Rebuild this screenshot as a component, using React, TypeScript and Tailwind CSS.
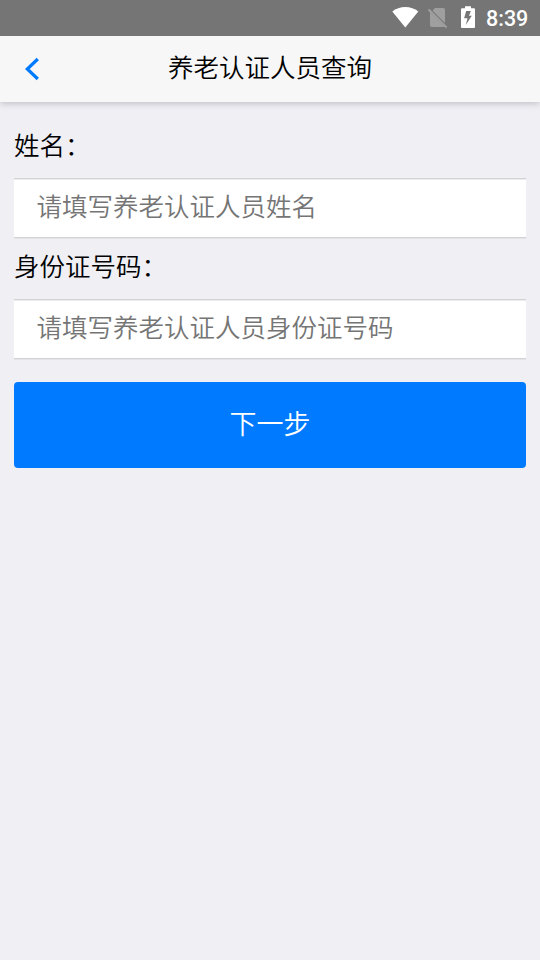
import { useState } from "react";

interface FieldProps {
  label: string;
  placeholder: string;
  value: string;
  onChange: (value: string) => void;
}

function StatusBar() {
  return (
    <div className="relative z-10 flex h-9 shrink-0 items-center bg-[#757575] pl-[392px] text-white">
      <svg className="h-9 w-[88px] shrink-0" viewBox="392 0 88 36" fill="currentColor">
        {/* wifi */}
        <path d="M392.3 11.6C395.8 8.6 400.5 7 405.3 7s9.5 1.6 13 4.6L405.3 27.6z" />
        {/* no sim */}
        <g opacity="0.3">
          <path d="M435 8H443.2a1.8 1.8 0 0 1 1.8 1.8V23L433.4 11.4 432.6 10.6z" />
          <path d="M430 12.2 444.4 26.6Q444 27 443.2 27H431.8a1.8 1.8 0 0 1-1.8-1.8z" />
          <path d="m427.8 10.2 1.5-1.5L447.3 26.700l-1.500 1.500z" />
        </g>
        {/* battery, charging */}
        <path
          fillRule="evenodd"
          d="M465 6.3h6v2h3a1 1 0 0 1 1 1V27a1 1 0 0 1-1 1h-12a1 1 0 0 1-1-1V9.3a1 1 0 0 1 1-1h3zM466.2 11h4.600l-1.800 4.700h2.800L465.800 25l1.700-6.700h-3.400z"
        />
      </svg>
      <span className="ml-[6px] pt-[2px] font-[Roboto] text-[21.5px] leading-none font-medium">8:39</span>
    </div>
  );
}

function Header({ title }: { title: string }) {
  return (
    <header className="relative flex h-[66px] shrink-0 items-center justify-center bg-[#f7f7f7] shadow-[0_1px_7px_#b8b8bc]">
      <button className="absolute left-6 top-[20px]" aria-label="返回">
        <svg className="h-[26px] w-4" viewBox="0 0 16 26" fill="none" stroke="#007aff" strokeWidth="3.2">
          <path d="M13.8 3 3.300 13 13.8 23" />
        </svg>
      </button>
      <h1 className="pb-[7px] text-[25.5px] leading-none font-[350]">{title}</h1>
    </header>
  );
}

function Field({ label, placeholder, value, onChange }: FieldProps) {
  return (
    <label className="block">
      <span className="flex h-[61px] items-center pb-[7px] text-[25.5px] leading-none">{label}</span>
      <input
        className="block h-[60px] w-full border-y border-[#d2d2d5] bg-white px-[22.5px] pb-[7px] text-[25.5px] shadow-[inset_0_1px_#ececee,0_1px_#e4e4e8] outline-none placeholder:text-[#757575]"
        placeholder={placeholder}
        value={value}
        onChange={(e) => onChange(e.target.value)}
      />
    </label>
  );
}

export default function App() {
  const [name, setName] = useState("");
  const [idNumber, setIdNumber] = useState("");

  return (
    <div className="flex h-screen flex-col bg-[#efeff4] font-['Noto_Sans_CJK_SC',sans-serif] font-[350] text-black">
      <StatusBar />
      <Header title="养老认证人员查询" />
      <main className="px-3.5 pt-[15px]">
        <Field label="姓名：" placeholder="请填写养老认证人员姓名" value={name} onChange={setName} />
        <Field label="身份证号码：" placeholder="请填写养老认证人员身份证号码" value={idNumber} onChange={setIdNumber} />
        <button className="mt-[23px] h-[86px] w-full rounded bg-[#007aff] pb-[3px] text-[27px] text-white">下一步</button>
      </main>
    </div>
  );
}
